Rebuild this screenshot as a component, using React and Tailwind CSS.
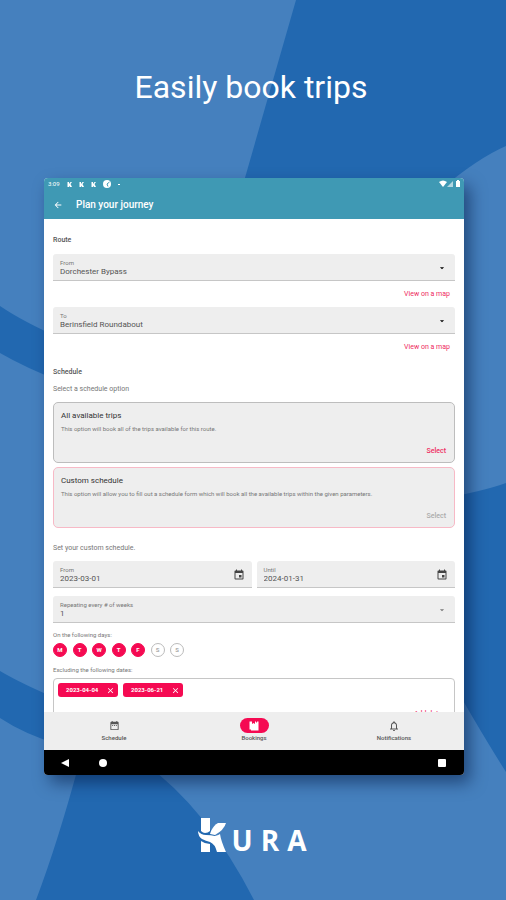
import React, { useState } from 'react';
import {
  MdArrowBack,
  MdArrowDropDown,
  MdClose,
  MdDateRange,
  MdEvent,
  MdNotificationsNone
} from 'react-icons/md';

const DAYS = [
  { id: 'mon', letter: 'M', name: 'Monday' },
  { id: 'tue', letter: 'T', name: 'Tuesday' },
  { id: 'wed', letter: 'W', name: 'Wednesday' },
  { id: 'thu', letter: 'T', name: 'Thursday' },
  { id: 'fri', letter: 'F', name: 'Friday' },
  { id: 'sat', letter: 'S', name: 'Saturday' },
  { id: 'sun', letter: 'S', name: 'Sunday' }
];

const Backdrop = () => (
  <svg
    className="absolute inset-0 -z-10 h-full w-full"
    viewBox="0 0 506 900"
    preserveAspectRatio="none"
    aria-hidden="true"
  >
    <rect width="506" height="900" fill="#4580be" />
    <g fill="#2268b0">
      <path d="M296 0H506V146Q478 158 440 190L230 230Z" />
      <path d="M506 483Q484 491 440 499V660Q478 728 506 772Z" />
      <path d="M0 306Q22 321 60 338V381Q26 368 0 353Z" />
      <path d="M0 671Q22 684 60 700V745Q24 734 0 718Z" />
      <path d="M80 760H140Q206 806 254 900H36Q58 842 80 760Z" />
    </g>
  </svg>
);

const StatusBar = () => (
  <div className="flex h-3 items-center justify-between pl-1 pr-[3px] text-white">
    <div className="flex items-center gap-[7px]">
      <span className="text-[6px] leading-3">3:09</span>
      {[0, 1, 2].map((n) => (
        <svg key={n} viewBox="0 0 10 10" className="h-[5px] w-[5px]" fill="currentColor">
          <path d="M1 0h3v4l3-4h3L7 4l3 6H6L4 7v3H1z" />
        </svg>
      ))}
      <svg viewBox="0 0 16 16" className="h-2 w-2">
        <circle cx="8" cy="8" r="8" fill="#fff" />
        <path d="M8 8l5-4M8 8l2 5" stroke="#3f99b4" strokeWidth="2" />
      </svg>
      <span className="h-px w-[2px] bg-white" />
    </div>
    <svg viewBox="0 0 22 8" className="h-2 w-[22px]">
      <path d="M0 2Q4-1 8 2L4 7z" fill="#fff" />
      <path d="M14 1v6H8z" fill="#fff" opacity=".6" />
      <path d="M17 1h1V0h2v1h1v6h-4z" fill="#fff" />
    </svg>
  </div>
);

const Field = ({ id, label, children }) => (
  <div className="relative w-full rounded-t-[3px] border-b border-[#c6c6c6] bg-[#eeeeee] pt-[5px] pb-[3px]">
    <label htmlFor={id} className="block px-[7px] text-[6px] leading-2 text-[#777]">
      {label}
    </label>
    {children}
  </div>
);

const SelectField = ({ id, label, value, muted }) => (
  <Field id={id} label={label}>
    <select
      id={id}
      defaultValue={value}
      className="block h-[10px] w-full appearance-none bg-transparent px-[7px] text-[8px] leading-[10px] text-[#555]"
    >
      <option>{value}</option>
    </select>
    <MdArrowDropDown
      className={`pointer-events-none absolute right-2 top-2 h-3 w-[10px] ${muted ? 'text-[#777]' : 'text-black'}`}
    />
  </Field>
);

const DateField = ({ id, label, value }) => (
  <Field id={id} label={label}>
    <input
      id={id}
      type="text"
      defaultValue={value}
      className="block h-[10px] w-full bg-transparent px-[7px] text-[8px] leading-[10px] text-[#555]"
    />
    <MdEvent className="pointer-events-none absolute right-[7px] top-2 h-3 w-3 text-[#444]" />
  </Field>
);

const MapLink = () => (
  <div className="flex h-[26px] items-center justify-end pr-[5px]">
    <a href="#map" className="text-[7px] leading-2 text-[#ee2a60]">
      View on a map
    </a>
  </div>
);

const OptionCard = ({ title, text, selected }) => (
  <div
    className={`flex h-[61px] flex-col rounded-[5px] border bg-[#eeeeee] px-[7px] pt-2 pb-[6px] ${
      selected ? 'border-[#f7b9c6]' : 'border-[#bdbdbd]'
    }`}
  >
    <h3 className="text-[8px] leading-[10px] text-[#333]">{title}</h3>
    <p className="mt-1 whitespace-nowrap text-[6px] leading-2 text-[#777]">{text}</p>
    <button
      type="button"
      disabled={selected}
      className={`mt-auto self-end pr-px text-[7px] font-medium leading-[10px] ${
        selected ? 'text-[#aaaaaa]' : 'text-[#ee2a60]'
      }`}
    >
      Select
    </button>
  </div>
);

const DateChip = ({ date }) => (
  <span className="flex h-[14px] w-[60px] items-center justify-between rounded-[3px] bg-[#f50a52] pl-2 pr-[3px] text-[6px] font-bold leading-none text-white">
    {date}
    <button type="button" aria-label={`Remove ${date}`}>
      <MdClose className="h-[9px] w-[9px]" />
    </button>
  </span>
);

const BookIcon = () => (
  <svg viewBox="0 0 20 20" className="h-[10px] w-[10px]">
    <path d="M1 1h5v5l3-2 3 2V1h2v2h2V1h3v18H4v-2H1z" fill="#fff" />
  </svg>
);

const NavItem = ({ label, active, children }) => (
  <button type="button" className="flex flex-1 flex-col items-center pt-[6px] text-[#555]">
    <span
      className={`flex h-[15px] w-[29px] items-center justify-center rounded-full ${active ? 'bg-[#f50a52]' : ''}`}
    >
      {children}
    </span>
    <span className="mt-px text-[6px] font-medium leading-2">{label}</span>
  </button>
);

const KuraLogo = () => (
  <div className="flex items-end justify-center pr-1 text-white" role="img" aria-label="Kura">
    <svg viewBox="0 0 30 36" className="h-9 w-[30px]" fill="#fff">
      <path d="M3 0h9v13q-2 2-5 2-2 0-4-2z" />
      <path d="M13 13q3-6 7-8h8q-2 7-11 12l-5-1z" />
      <path d="M0 13q3 4 8 4 5 0 9 1 4-1 5-2 1 7 6 18h-9q-2-8-7-10-4-1-8-3-4-3-4-8z" />
      <path d="M3 23q4 3 9 3v8H3z" />
    </svg>
    <span className="flex gap-2 pl-1 font-['Open_Sans'] text-[28px] font-bold leading-7">
      <span>U</span>
      <span>R</span>
      <span>A</span>
    </span>
  </div>
);

export default function App() {
  const [days, setDays] = useState(['mon', 'tue', 'wed', 'thu', 'fri']);

  const toggleDay = (id) => {
    setDays(days.includes(id) ? days.filter((d) => d !== id) : [...days, id]);
  };

  return (
    <main className="relative isolate flex h-screen flex-col overflow-hidden pl-11 pr-[42px] font-[Roboto,sans-serif]">
      <Backdrop />

      <h1 className="pt-[67px] pr-[6px] pb-[71px] text-center text-[32px] leading-10 text-white">
        Easily book trips
      </h1>

      {/* Device */}
      <div className="flex min-h-0 flex-1 flex-col overflow-hidden rounded-[4px] bg-white shadow-[6px_8px_16px_rgba(0,20,60,0.5)]">
        <header className="bg-[#3f99b4] text-white">
          <StatusBar />
          <div className="flex h-[29px] items-center gap-[13px] pt-px pl-[9px]">
            <button type="button" aria-label="Back">
              <MdArrowBack className="h-[10px] w-[10px]" />
            </button>
            <h2 className="text-[10px] font-medium leading-3">Plan your journey</h2>
          </div>
        </header>

        <div className="min-h-0 flex-1 overflow-hidden px-[9px]">
          <h3 className="pt-4 text-[7px] font-medium leading-[10px] text-[#555]">Route</h3>
          <div className="mt-[9px]">
            <SelectField id="from" label="From" value="Dorchester Bypass" />
            <MapLink />
            <SelectField id="to" label="To" value="Berinsfield Roundabout" />
            <MapLink />
          </div>

          <h3 className="mt-[7px] text-[7px] font-medium leading-[10px] text-[#555]">Schedule</h3>
          <p className="mt-2 text-[7px] leading-2 text-[#777]">Select a schedule option</p>
          <div className="mt-[9px] flex flex-col gap-1">
            <OptionCard
              title="All available trips"
              text="This option will book all of the trips available for this route."
            />
            <OptionCard
              title="Custom schedule"
              text="This option will allow you to fill out a schedule form which will book all the available trips within the given parameters."
              selected
            />
          </div>

          <p className="mt-4 text-[7px] leading-2 text-[#777]">Set your custom schedule.</p>
          <div className="mt-[9px] flex gap-[5px]">
            <DateField id="start" label="From" value="2023-03-01" />
            <DateField id="until" label="Until" value="2024-01-31" />
          </div>
          <div className="mt-2">
            <SelectField id="weeks" label="Repeating every # of weeks" value="1" muted />
          </div>

          <p className="mt-2 text-[6px] leading-2 text-[#777]">On the following days:</p>
          <div className="mt-1 flex w-[131px] justify-between">
            {DAYS.map((day) => (
              <button
                key={day.id}
                type="button"
                aria-label={day.name}
                aria-pressed={days.includes(day.id)}
                onClick={() => toggleDay(day.id)}
                className={`h-[14px] w-[14px] rounded-full border text-[6px] font-bold leading-none ${
                  days.includes(day.id)
                    ? 'border-[#f50a52] bg-[#f50a52] text-white'
                    : 'border-[#bbb] bg-white text-[#aaa]'
                }`}
              >
                {day.letter}
              </button>
            ))}
          </div>

          <p className="mt-[9px] text-[6px] leading-2 text-[#777]">Excluding the following dates:</p>
          <div className="mt-1 rounded-[4px] border border-[#c6c6c6] px-1 pt-1 pb-2">
            <div className="flex gap-[5px]">
              <DateChip date="2023-04-04" />
              <DateChip date="2023-06-21" />
            </div>
            <div className="mt-[13px] flex justify-end pr-2">
              <button type="button" className="text-[7px] font-medium leading-2 text-[#ee4a76]">
                Add date
              </button>
            </div>
          </div>
        </div>

        {/* Bottom navigation */}
        <nav className="flex h-[38px] bg-[#eeeeee]">
          <NavItem label="Schedule">
            <MdDateRange className="h-[11px] w-[11px]" />
          </NavItem>
          <NavItem label="Bookings" active>
            <BookIcon />
          </NavItem>
          <NavItem label="Notifications">
            <MdNotificationsNone className="h-3 w-3" />
          </NavItem>
        </nav>

        <div className="flex h-[25px] items-center bg-black pl-[17px] pr-[18px] text-white">
          <button type="button" aria-label="System back">
            <svg viewBox="0 0 8 8" className="h-2 w-2" fill="currentColor">
              <path d="M8 0v8L0 4z" />
            </svg>
          </button>
          <button type="button" aria-label="Home" className="ml-[30px] h-2 w-2 rounded-full bg-white" />
          <button type="button" aria-label="Recent apps" className="ml-auto h-2 w-2 rounded-[1px] bg-white" />
        </div>
      </div>

      <footer className="h-[125px] pt-[43px]">
        <KuraLogo />
      </footer>
    </main>
  );
}
